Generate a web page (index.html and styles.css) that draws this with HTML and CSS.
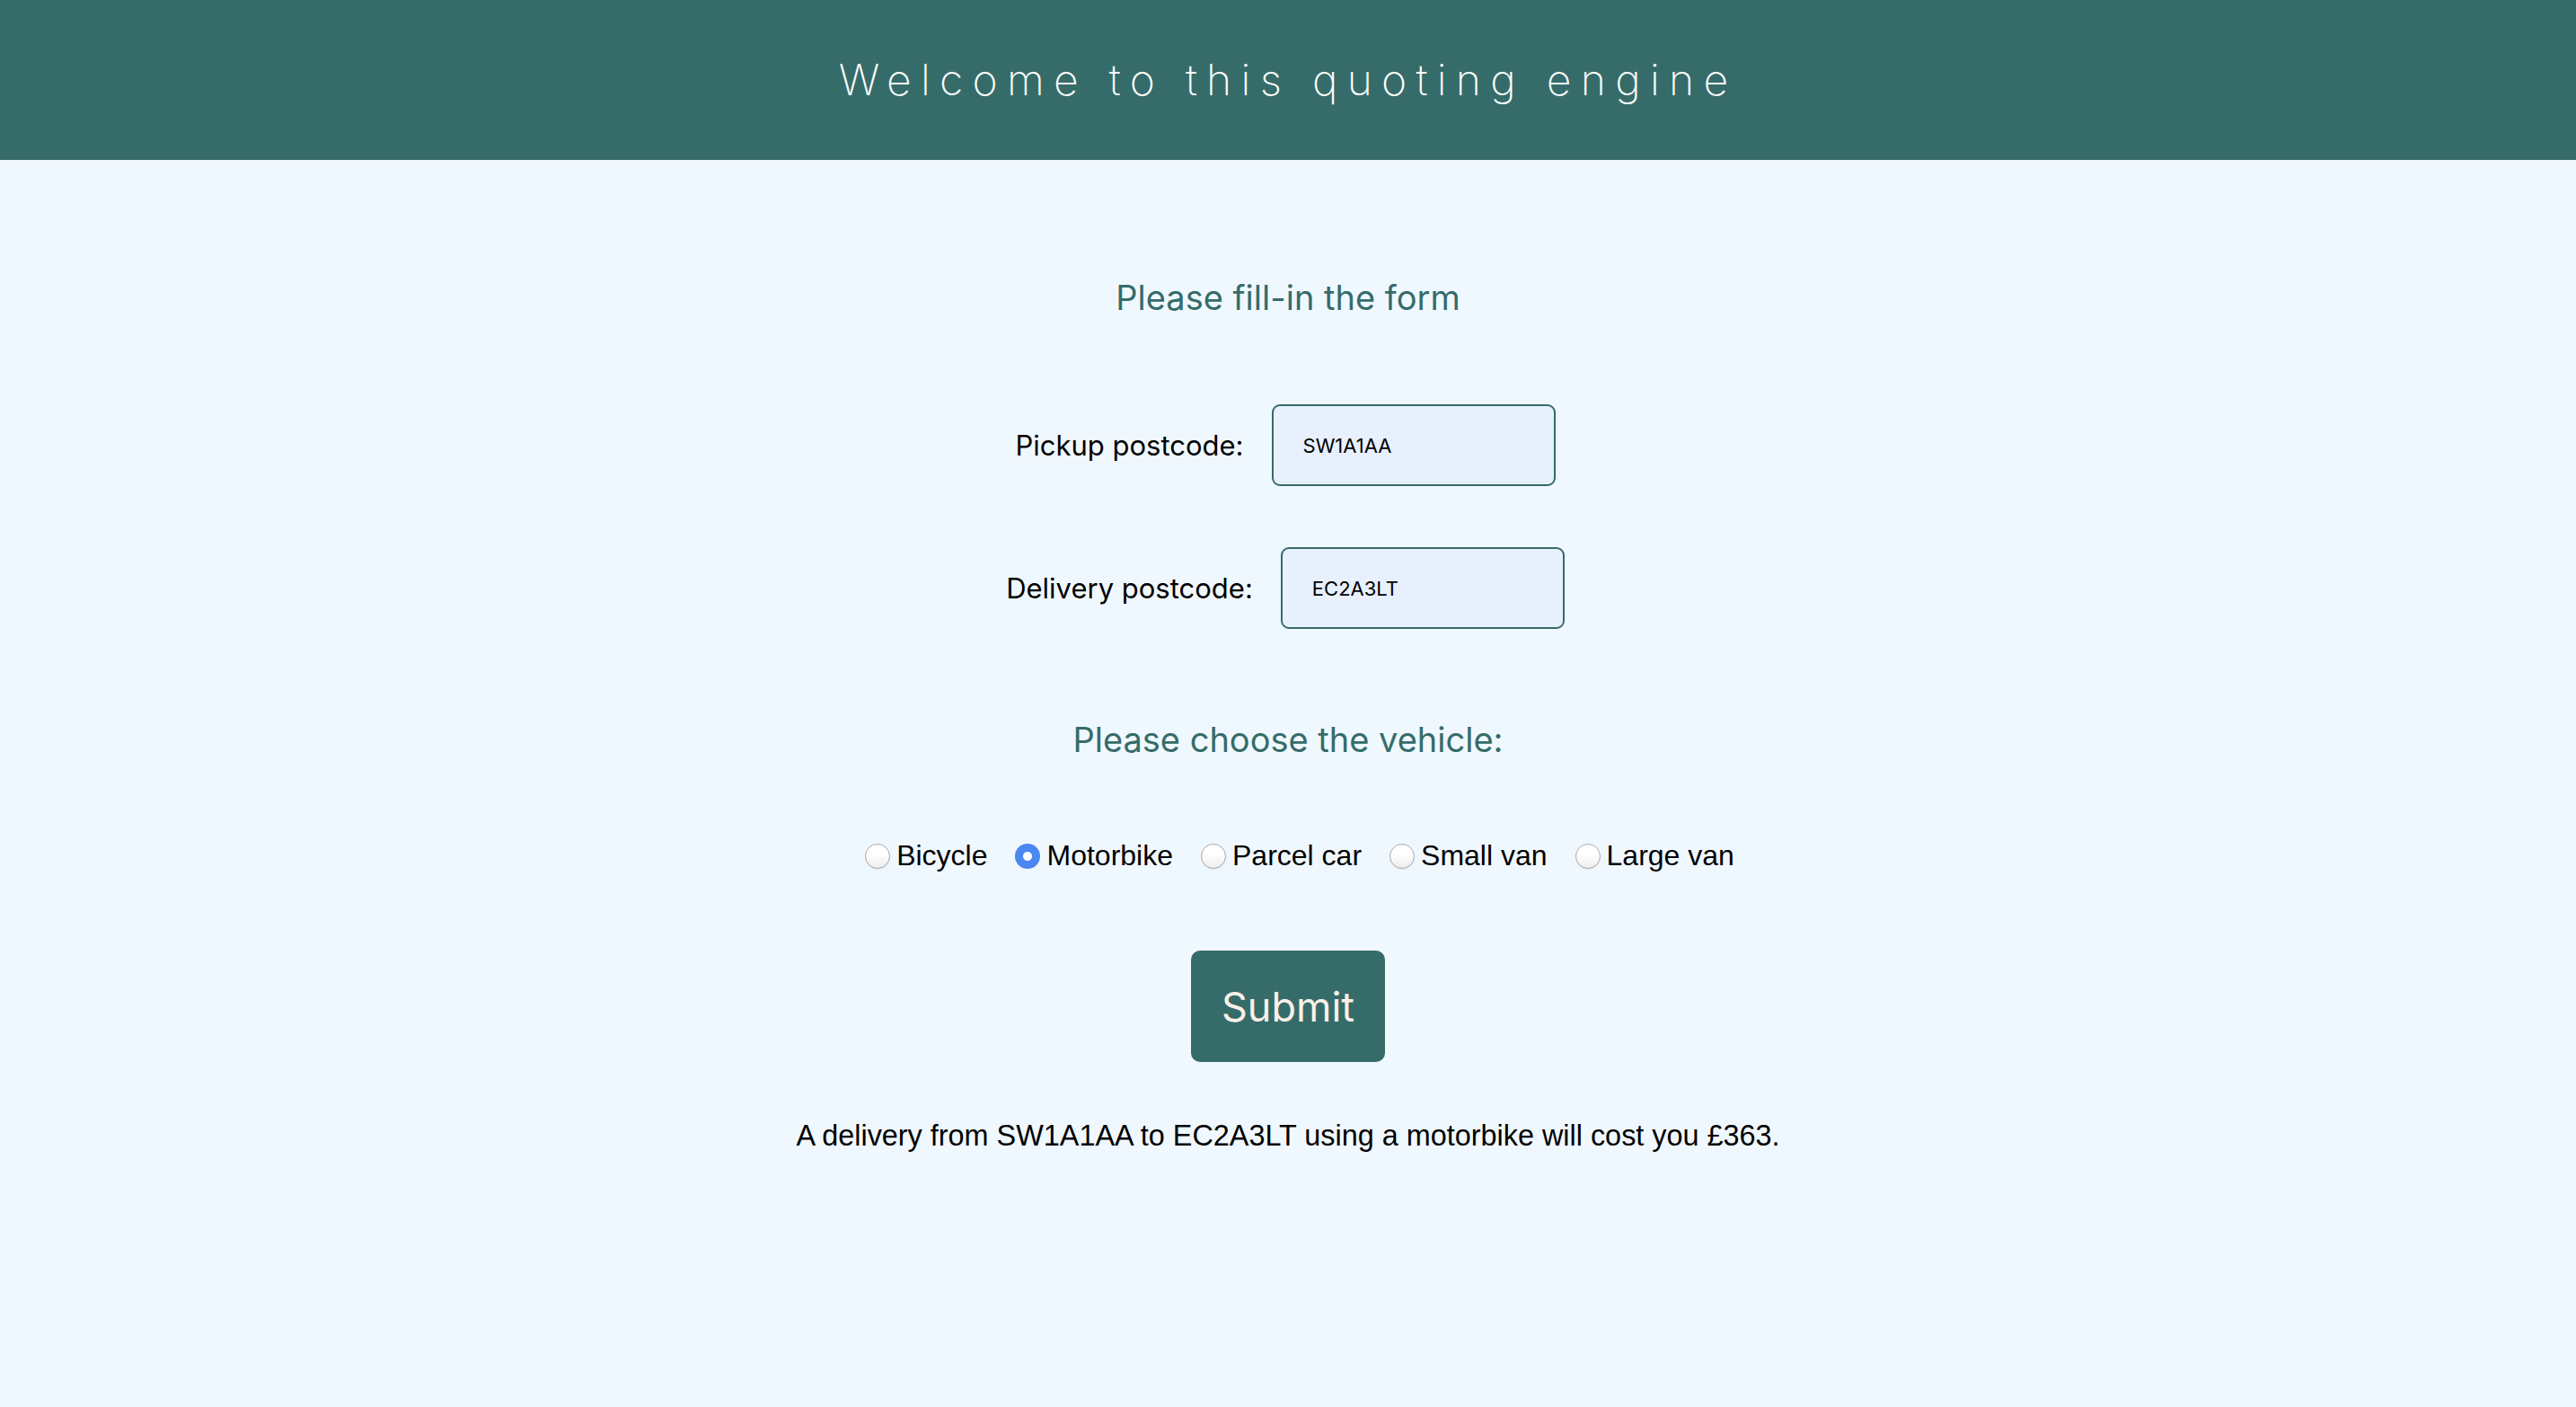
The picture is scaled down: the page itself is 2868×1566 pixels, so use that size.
FILE: index.html
```html
<!DOCTYPE html>
<html lang="en">
<head>
<meta charset="utf-8">
<title>Quoting engine</title>
<link rel="stylesheet" href="styles.css">
</head>
<body>
<header class="topbar">
  <h1 class="title">Welcome to this quoting engine</h1>
</header>
<main class="page">
  <h3 class="section-title first">Please fill-in the form</h3>
  <form class="quote-form">
    <div class="field-row pickup">
      <label class="field-label" for="pickup">Pickup postcode:</label>
      <input class="field-input" id="pickup" type="text" value="SW1A1AA">
    </div>
    <div class="field-row delivery">
      <label class="field-label" for="delivery">Delivery postcode:</label>
      <input class="field-input" id="delivery" type="text" value="EC2A3LT">
    </div>
    <h3 class="section-title second">Please choose the vehicle:</h3>
    <div class="radio-row">
      <label class="radio-item"><input type="radio" name="vehicle" class="radio"><span>Bicycle</span></label>
      <label class="radio-item"><input type="radio" name="vehicle" class="radio" checked><span>Motorbike</span></label>
      <label class="radio-item"><input type="radio" name="vehicle" class="radio"><span>Parcel car</span></label>
      <label class="radio-item"><input type="radio" name="vehicle" class="radio"><span>Small van</span></label>
      <label class="radio-item"><input type="radio" name="vehicle" class="radio"><span>Large van</span></label>
    </div>
    <button class="submit" type="button">Submit</button>
  </form>
  <p class="result">A delivery from SW1A1AA to EC2A3LT using a motorbike will cost you £363.</p>
</main>
</body>
</html>
```

FILE: styles.css
```css
* { box-sizing: border-box; }

html, body {
  margin: 0;
  padding: 0;
  background: #f0f8ff;
  height: 100%;
}

body {
  font-family: "Liberation Sans", Arial, sans-serif;
  color: #000;
}

.topbar {
  height: 178px;
  background: #356c6a;
  display: flex;
  align-items: center;
  justify-content: center;
}

.title {
  margin: 0;
  font-family: Inter, "Liberation Sans", sans-serif;
  font-weight: 200;
  font-size: 48px;
  line-height: 1;
  letter-spacing: 10.3px;
  color: #ffffff;
}

.page {
  display: flex;
  flex-direction: column;
  align-items: center;
}

.section-title {
  margin: 0;
  font-family: Inter, "Liberation Sans", sans-serif;
  font-weight: 400;
  font-size: 38px;
  line-height: 46px;
  color: #356c6a;
}

.section-title.first { margin-top: 130px; }
.section-title.second { margin-top: 100px; }

.quote-form {
  display: flex;
  flex-direction: column;
  align-items: center;
}

.field-row {
  display: flex;
  align-items: center;
  gap: 31px;
  padding-right: 6px;
}

.field-row.pickup { margin-top: 96px; }
.field-row.delivery { margin-top: 68px; }

.field-label {
  font-family: Inter, "Liberation Sans", sans-serif;
  font-size: 31px;
  color: #000;
}

.field-input {
  width: 316px;
  height: 91px;
  border: 2px solid #356c6a;
  border-radius: 9px;
  background: #e8f0fe;
  padding: 0 33px;
  font-family: Inter, "Liberation Sans", sans-serif;
  font-size: 22px;
  color: #000;
  outline: none;
}

.radio-row {
  margin-top: 86px;
  display: flex;
  align-items: center;
  gap: 31px;
  padding-left: 26px;
  height: 40px;
}

.radio-item {
  display: flex;
  align-items: center;
  gap: 7px;
  font-size: 32px;
  line-height: 40px;
}

.radio {
  appearance: none;
  -webkit-appearance: none;
  margin: 2px 0 0 0;
  width: 28px;
  height: 28px;
  border-radius: 50%;
  border: 1.5px solid #a9a9a9;
  background: linear-gradient(#ffffff 40%, #ededed);
  box-shadow: 0 1px 1px rgba(0, 0, 0, 0.08);
}

.radio:checked {
  border: none;
  box-shadow: none;
  background: radial-gradient(circle, #ffffff 0 4.5px, #4b87f1 5.5px);
}

.submit {
  margin-top: 86px;
  width: 216px;
  height: 124px;
  border: none;
  border-radius: 10px;
  background: #356c6a;
  color: #faf0e6;
  font-family: Inter, "Liberation Sans", sans-serif;
  font-size: 45px;
  padding: 0;
}

.result {
  margin: 62px 0 0;
  font-size: 32.4px;
  line-height: 40px;
}
```
